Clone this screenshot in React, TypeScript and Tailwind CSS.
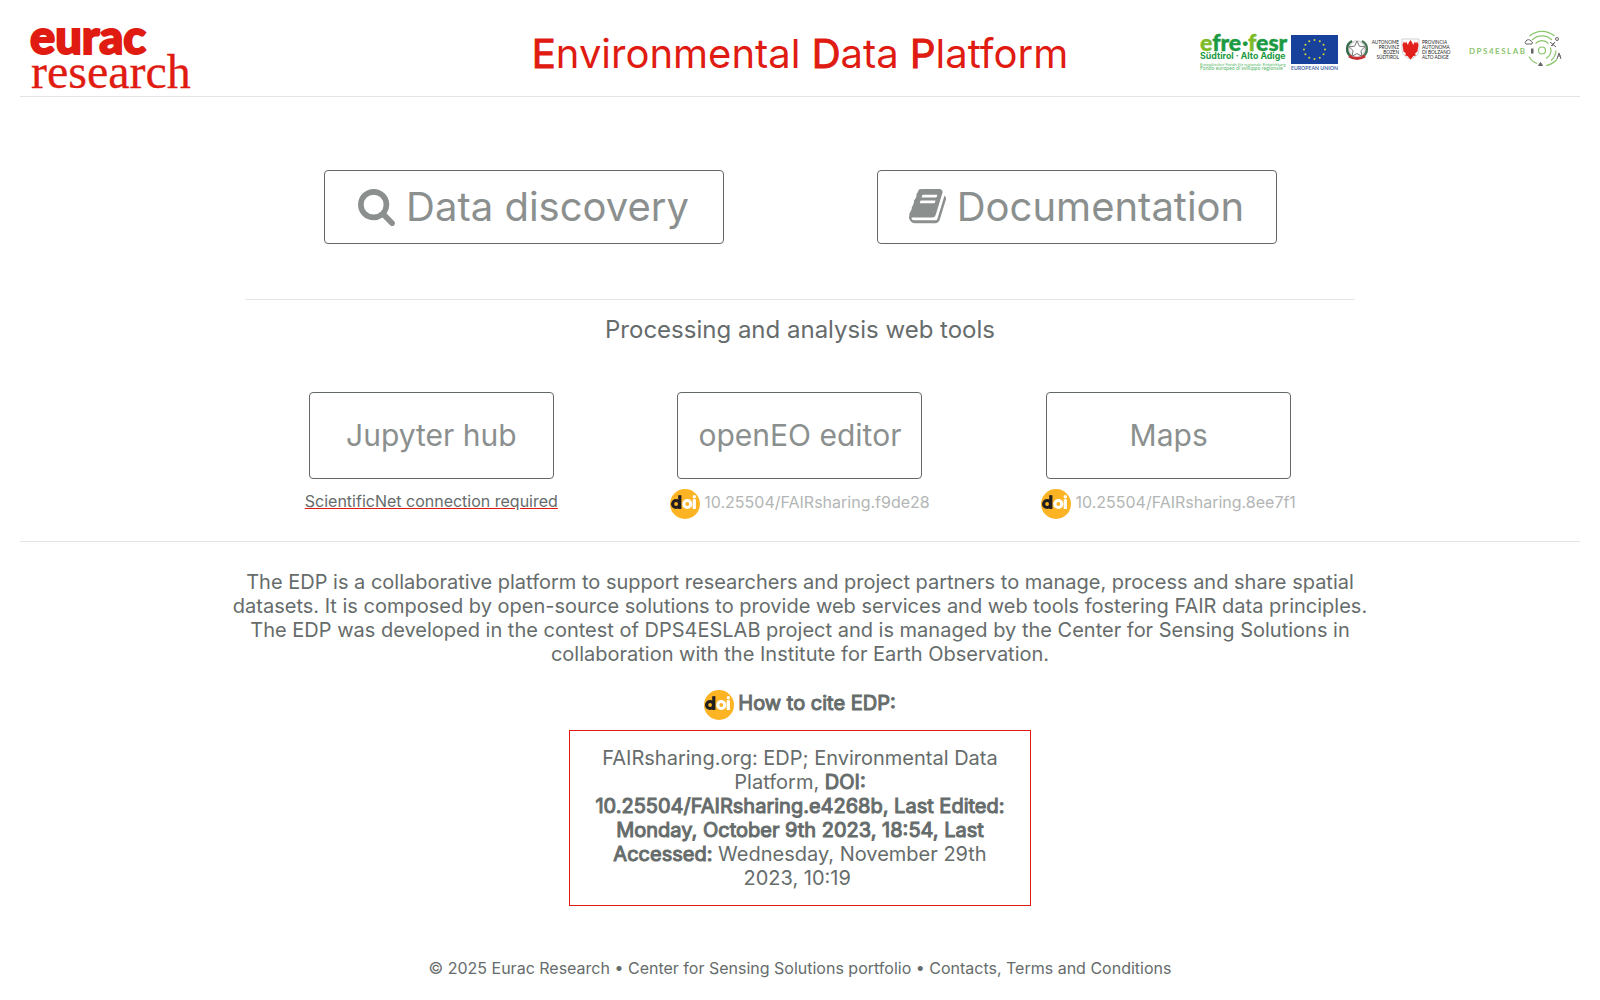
import React from 'react';

const tools = [
  { label: 'Jupyter hub', note: 'ScientificNet connection required' },
  { label: 'openEO editor', doi: '10.25504/FAIRsharing.f9de28' },
  { label: 'Maps', doi: '10.25504/FAIRsharing.8ee7f1' },
];

const EuracLogo: React.FC = () => (
  <svg className="overflow-visible" width="166" height="96" viewBox="0 0 166 96" role="img" aria-label="Eurac Research" fill="#df1b12">
    <text x="0" y="54" fontFamily="Lato, sans-serif" fontWeight="900" fontSize="47" stroke="#df1b12" strokeWidth="2">eurac</text>
    <text x="1" y="88" fontFamily="'Liberation Serif', serif" fontSize="48" stroke="#df1b12" strokeWidth="0.3">research</text>
  </svg>
);

const SearchIcon: React.FC = () => (
  <svg width="37" height="37" viewBox="0 128 1664 1664" fill="currentColor" aria-hidden="true">
    <path d="M1152 832q0-185-131.500-316.500t-316.500-131.500-316.500 131.500-131.500 316.500 131.500 316.500 316.500 131.500 316.500-131.500 131.500-316.500zm512 832q0 52-38 90t-90 38q-54 0-90-38l-343-342q-179 124-399 124-143 0-273.500-55.500t-225-150-150-225-55.500-273.500 55.500-273.500 150-225 225-150 273.500-55.500 273.500 55.500 225 150 150 225 55.500 273.500q0 220-124 399l343 343q37 37 37 90z" />
  </svg>
);

const BookIcon: React.FC = () => (
  <svg width="37" height="37" viewBox="0 128 1664 1664" fill="currentColor" aria-hidden="true">
    <path d="M1639 478q40 57 18 129l-275 906q-19 64-76.500 107.500t-122.500 43.500h-923q-77 0-148.500-53.500t-99.500-131.500q-24-67-2-127 0-4 3-27t4-37q1-8-3-21.500t-3-19.500q2-11 8-21t16.500-23.500 16.500-23.500q23-38 45-91.500t30-91.500q3-10 .5-30t-.5-28q3-11 17-28t17-23q21-36 42-92t25-90q1-9-2.500-32t.5-28q4-13 22-30.500t22-22.500q19-26 42.500-84.500t27.500-96.500q1-8-3-25.500t-2-26.500q2-8 9-18t18-23 17-21q8-12 16.500-30.500t15-35 16-36 19.500-32 26.500-23.500 36-11.500 47.500 5.500l-1 3q38-9 51-9h761q74 0 114 56t18 130l-274 906q-36 119-71.500 153.500t-128.500 34.500h-869q-27 0-38 15-11 16-1 43 24 70 144 70h923q29 0 56-15.500t35-41.500l300-987q7-22 5-57 38 15 59 43zm-1064 2q-4 13 2 22.500t20 9.500h608q13 0 25.500-9.500t16.500-22.500l21-64q4-13-2-22.500t-20-9.500h-608q-13 0-25.500 9.500t-16.500 22.500zm-83 256q-4 13 2 22.500t20 9.500h608q13 0 25.500-9.500t16.500-22.500l21-64q4-13-2-22.500t-20-9.500h-608q-13 0-25.500 9.500t-16.500 22.500z" />
  </svg>
);

const DoiIcon: React.FC = () => (
  <svg className="shrink-0" width="30" height="30" viewBox="0 0 30 30" aria-hidden="true">
    <circle cx="15" cy="15" r="15" fill="#fcb425" />
    <g fill="none" strokeWidth="3.2">
      <circle cx="6.1" cy="15" r="3.5" stroke="#231f20" />
      <path d="M9.8 6.2V20" stroke="#231f20" />
      <circle cx="17.3" cy="15" r="3.5" stroke="#fff" />
      <path d="M24.3 10.2V20" stroke="#fff" />
    </g>
    <circle cx="24.3" cy="7.8" r="1.7" fill="#fff" />
  </svg>
);

const star = (i: number) => {
  const a = (i * Math.PI) / 6;
  return { x: 114.5 + 10.5 * Math.sin(a), y: 19.5 - 9.5 * Math.cos(a) };
};

const PartnerLogos: React.FC = () => (
  <svg className="overflow-visible" width="364" height="44" viewBox="0 0 364 44" role="img" aria-label="efre-fesr, European Union, Autonome Provinz Bozen, DPS4ESLAB" fontFamily="Lato, sans-serif">
    {/* efre-fesr */}
    <g fontWeight="900" fontSize="23" strokeWidth="0.4">
      <text x="0" y="21" fill="#1b9a41" stroke="#1b9a41">
        <tspan fill="#7dbb28" stroke="#7dbb28">e</tspan>fre
      </text>
      <text x="42" y="21" fill="#1b9a41">·</text>
      <text x="48" y="21" fill="#1b9a41" stroke="#1b9a41">
        <tspan fill="#7dbb28" stroke="#7dbb28">f</tspan>esr
      </text>
    </g>
    <text x="0" y="29" fontFamily="Inter, sans-serif" fontSize="8.8" fontWeight="700" fill="#1b9a41">Südtirol · Alto Adige</text>
    <text x="0" y="36" fontSize="4.3" fill="#58b96c">Europäischer Fonds für regionale Entwicklung</text>
    <text x="0" y="40" fontSize="5.2" fill="#58b96c">Fondo europeo di sviluppo regionale</text>

    {/* European Union */}
    <rect x="91" y="5" width="47" height="29" fill="#17419a" />
    {Array.from({ length: 12 }, (_, i) => (
      <circle key={i} cx={star(i).x} cy={star(i).y} r="1" fill="#d8d834" />
    ))}
    <text x="91" y="39.500" fontSize="5.2" fontWeight="700" fill="#4968a8">EUROPEAN UNION</text>

    {/* Italian Republic */}
    <g fill="none">
      <circle cx="157" cy="19" r="8" stroke="#ddd" strokeWidth="2" />
      <path d="M152 27A9 9 0 0 1 152 11" stroke="#356b48" strokeWidth="2.5" />
      <path d="M162 27A9 9 0 0 0 162 11" stroke="#4b7858" strokeWidth="2.5" />
      <path d="M149 26Q157 31 165 26" stroke="#c92c31" strokeWidth="3" />
    </g>
    <path d="M157 11l2.400 5.200 5.500.6-4 3.900 1 5.600-4.900-2.800-4.900 2.800 1-5.600-4-3.900 5.500-.6z" fill="#fff" stroke="#777" strokeWidth="1" />

    {/* Province of Bolzano */}
    <g fontSize="4.700" fill="#222" textAnchor="end">
      <text x="199" y="13.500">AUTONOME</text>
      <text x="199" y="18.500">PROVINZ</text>
      <text x="199" y="23.500">BOZEN</text>
      <text x="199" y="28.500">SÜDTIROL</text>
    </g>
    <path d="M202 9h17v11q0 6-8.500 9q-8.500-3-8.500-9z" fill="#fff" stroke="#bbb" strokeWidth="0.7" />
    <path d="M210.500 10l2 3 .5 2 2-3.500 1 2 1-2 1.500 3-1 7-2.500 2 1 2-2.500.5-3 3.500-3-3.500-2.500-.5 1-2-2.500-2-1-7 1.500-3 1 2 1-2 2 3.500.5-2z" fill="#e3211c" />
    <g fontSize="4.700" fill="#222">
      <text x="222" y="13.500">PROVINCIA</text>
      <text x="222" y="18.500">AUTONOMA</text>
      <text x="222" y="23.500">DI BOLZANO</text>
      <text x="222" y="28.500">ALTO ADIGE</text>
    </g>

    {/* DPS4ESLAB */}
    <text x="269" y="23.500" fontSize="8" fontWeight="700" letterSpacing="1.500" fill="#8cc56d">DPS4ESLAB</text>
    <g fill="none" stroke="#8cc56d" strokeWidth="1.200">
      <circle cx="342" cy="20.500" r="3.500" />
      <path d="M335.500 13.500A9 9 0 0 1 348.500 13.500" />
      <path d="M332 10A14 14 0 0 1 352 10" />
      <path d="M329.500 6A19 19 0 0 1 354.500 6" />
      <path d="M346 28.500A9 9 0 0 0 350.500 17.500" />
      <path d="M351 30.500A14 14 0 0 0 356 20.500" />
      <path d="M329 26.500A14 14 0 0 0 337 33.500" />
      <path d="M346 35.500A19 19 0 0 0 357 29.500" />
    </g>
    <g fill="none" stroke="#666" strokeWidth="1">
      <path d="M326 14a2 2 0 0 1 0-3 3 3 0 0 1 5 0 2 2 0 0 1 1 3z" />
      <path d="M350 12l6 5M355 12l-3 4M351 16l3-3M357 29l2-6 2 6M358 26h3" />
      <circle cx="357" cy="9" r="1.500" />
      <path d="M338.500 35.500h4l-2-3z" fill="#666" />
    </g>
    <rect x="331" y="18.500" width="2.500" height="5" fill="#666" />
  </svg>
);

const App: React.FC = () => {
  return (
    <div className="min-h-screen bg-white px-5 font-['Inter',sans-serif] text-[#666c6b]">
      <header className="grid h-[97px] grid-cols-[1fr_auto_1fr] items-center border-b border-[#e3e4e4] px-2.5">
        <a href="#"><EuracLogo /></a>
        <h1 className="pt-3 text-[40px] leading-12 text-[#df1b12]">
          <b className="font-normal [-webkit-text-stroke:1px]">E</b>nvironmental <b className="font-normal [-webkit-text-stroke:1px]">D</b>ata <b className="font-normal [-webkit-text-stroke:1px]">P</b>latform
        </h1>
        <div className="justify-self-end pt-2 pr-1.5"><PartnerLogos /></div>
      </header>

      <main className="mx-auto max-w-[1154px] text-center">
        <section className="grid grid-cols-2 justify-items-center px-6 pt-[73px] pb-[55px]">
          <button className="flex h-[74px] w-[400px] items-center justify-center gap-[11px] rounded border border-[#636968] text-[40px] text-[#8b908f]">
            <SearchIcon /> Data discovery
          </button>
          <button className="flex h-[74px] w-[400px] items-center justify-center gap-[11px] rounded border border-[#636968] text-[40px] text-[#8b908f]">
            <BookIcon /> Documentation
          </button>
        </section>

        <section className="mx-auto max-w-[1110px] border-t border-[#e3e4e4] pt-4">
          <h2 className="text-2xl leading-7">Processing and analysis web tools</h2>
          <div className="grid grid-cols-3 justify-items-center px-0.5 pt-12">
            {tools.map((tool) => (
              <div key={tool.label} className="flex flex-col items-center">
                <button className="h-[87px] w-[245px] rounded border border-[#636968] pb-0.5 text-3xl text-[#8b908f]">{tool.label}</button>
                {tool.doi ? (
                  <a href="#" className="mt-2.5 flex items-center gap-1 text-[#b3b6b5]">
                    <DoiIcon /> <span className="pb-1">{tool.doi}</span>
                  </a>
                ) : (
                  <p className="mt-2.5 underline decoration-[#df1b12]">{tool.note}</p>
                )}
              </div>
            ))}
          </div>
        </section>
      </main>

      <section className="mt-[22px] border-t border-[#e3e4e4] pt-7 text-center text-xl leading-6">
        <p className="mx-auto max-w-[1160px]">
          The EDP is a collaborative platform to support researchers and project partners to manage, process and share spatial datasets. It is composed by open-source solutions to provide web services and web tools fostering FAIR data principles. The EDP was developed in the contest of DPS4ESLAB project and is managed by the Center for Sensing Solutions in collaboration with the Institute for Earth Observation.
        </p>
        <h3 className="mt-6 flex items-center justify-center gap-1 [-webkit-text-stroke:1px]">
          <DoiIcon /> <span className="pb-1">How to cite EDP:</span>
        </h3>
        <p className="mx-auto mt-2.5 max-w-[462px] border border-[#df1b12] px-5 py-[15px]">
          FAIRsharing.org: EDP; Environmental Data Platform, <b className="font-normal [-webkit-text-stroke:1px]">DOI: 10.25504/FAIRsharing.e4268b, Last Edited: Monday, October 9th 2023, 18:54, Last Accessed:</b> Wednesday, November 29th 2023, 10:19&nbsp;
        </p>
      </section>

      <footer className="pt-[50px] text-center">
        © 2025 Eurac Research • <a href="#">Center for Sensing Solutions portfolio</a> • <a href="#">Contacts, Terms and Conditions</a>
      </footer>
    </div>
  );
};

export default App;
